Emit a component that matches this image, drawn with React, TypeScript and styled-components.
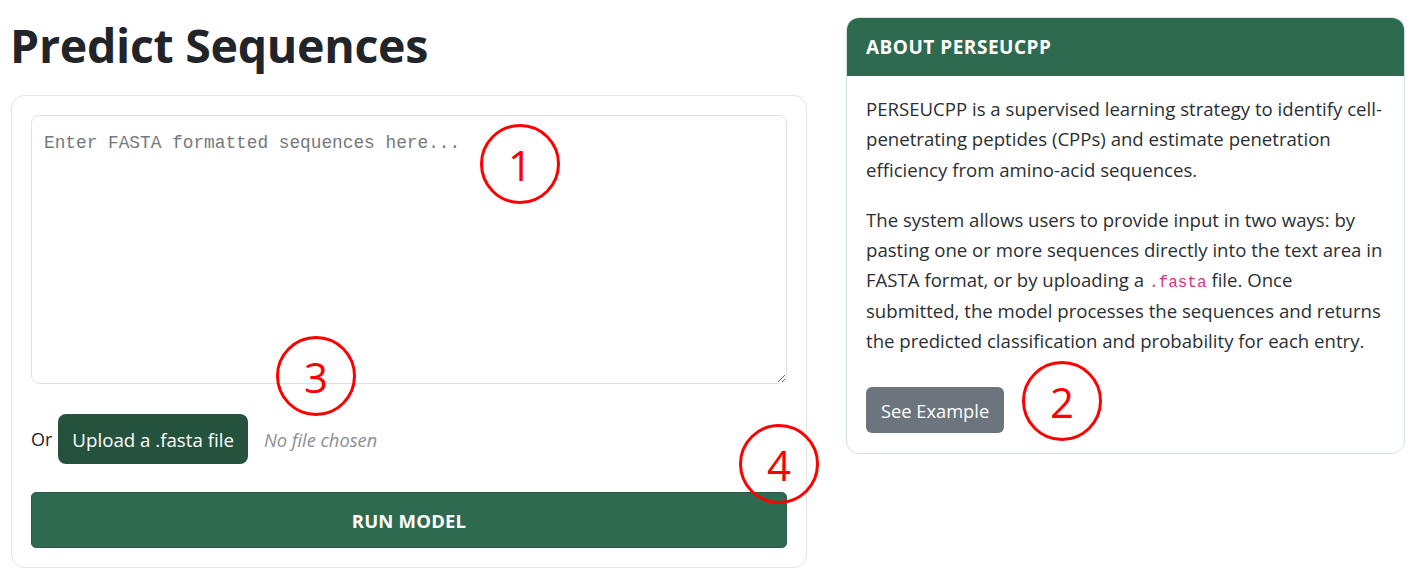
import React from 'react';
import styled, { createGlobalStyle } from 'styled-components';

const GlobalStyle = createGlobalStyle`
  html, body {
    margin: 0;
    padding: 0;
    background: #ffffff;
  }
  body {
    font-family: 'Open Sans', 'Noto Sans', Arial, sans-serif;
    color: #212529;
  }
  * {
    box-sizing: border-box;
  }
`;

const Page = styled.div`
  position: relative;
  width: 1415px;
  height: 580px;
  display: flex;
  align-items: flex-start;
  gap: 39px;
  padding: 0 10px 0 11px;
`;

const MainColumn = styled.div`
  width: 796px;
  display: flex;
  flex-direction: column;
`;

const Title = styled.h1`
  margin: 15px 0 20px -1px;
  font-size: 46.5px;
  line-height: 60px;
  font-weight: 700;
  letter-spacing: -0.3px;
  color: #212529;
`;

const Card = styled.div`
  border: 1px solid #e3e5e7;
  border-radius: 13px;
  padding: 19px;
  display: flex;
  flex-direction: column;
`;

const SequenceInput = styled.textarea`
  width: 100%;
  height: 269px;
  border: 1px solid #dee2e6;
  border-radius: 8px;
  padding: 14px 12px;
  font-family: 'Liberation Mono', 'DejaVu Sans Mono', monospace;
  font-size: 17.8px;
  line-height: 26px;
  resize: vertical;
  color: #212529;
  outline: none;

  &::placeholder {
    color: #75797d;
  }
`;

const UploadRow = styled.div`
  margin-top: 30px;
  display: flex;
  align-items: center;
  gap: 6px;
  font-size: 18px;
`;

const OrText = styled.span`
  color: #212529;
`;

const HiddenInput = styled.input`
  display: none;
`;

const UploadButton = styled.label`
  height: 50px;
  padding: 0 14px;
  display: inline-flex;
  align-items: center;
  background: #24523d;
  color: #ffffff;
  border-radius: 8px;
  font-size: 18.7px;
  cursor: pointer;
`;

const FileName = styled.span`
  margin-left: 10px;
  color: #8b8e91;
  font-style: italic;
  font-size: 18.3px;
`;

const RunButton = styled.button`
  margin-top: 28px;
  height: 56px;
  width: 100%;
  border: 1px solid #285c45;
  border-radius: 5px;
  background: #2e6a4f;
  color: #ffffff;
  font-family: inherit;
  font-size: 18.5px;
  font-weight: 700;
  letter-spacing: 0.2px;
  cursor: pointer;
`;

const InfoCard = styled.aside`
  margin-top: 17px;
  width: 559px;
  border: 1px solid #cfe5da;
  border-radius: 13px;
  overflow: hidden;
`;

const InfoHeader = styled.div`
  height: 58px;
  padding: 0 19px;
  display: flex;
  align-items: center;
  background: #2e6a4f;
  color: #ffffff;
  font-size: 19px;
  font-weight: 700;
  letter-spacing: 0.5px;
`;

const InfoBody = styled.div`
  padding: 18px 19px 20px;
`;

const Paragraph = styled.p`
  margin: 0 0 20px;
  font-size: 18.6px;
  line-height: 30.3px;
  color: #2b2f33;
`;

const Code = styled.code`
  font-family: 'Liberation Mono', 'DejaVu Sans Mono', monospace;
  font-size: 16px;
  line-height: 1;
  color: #d63384;
`;

const ExampleButton = styled.button`
  margin-top: 11px;
  height: 46px;
  padding: 0 15px;
  border: none;
  border-radius: 6px;
  background: #6c757d;
  color: #ffffff;
  font-family: inherit;
  font-size: 18.3px;
  cursor: pointer;
`;

const Marker = styled.div<{ $x: number; $y: number }>`
  position: absolute;
  left: ${(p) => p.$x - 40}px;
  top: ${(p) => p.$y - 40}px;
  width: 80px;
  height: 80px;
  border: 3px solid #ff0000;
  border-radius: 50%;
  display: flex;
  align-items: center;
  justify-content: center;
  color: #ff0000;
  font-family: 'Open Sans', Arial, sans-serif;
  font-size: 42px;
  font-weight: 400;
  pointer-events: none;
`;

const markers = [
  { n: 1, x: 520, y: 164 },
  { n: 2, x: 1062, y: 401 },
  { n: 3, x: 316, y: 376 },
  { n: 4, x: 779, y: 464 },
];

const App = () => {
  return (
    <React.Fragment>
      <GlobalStyle />
      <Page>
        <MainColumn>
          <Title>Predict Sequences</Title>
          <Card>
            <SequenceInput placeholder="Enter FASTA formatted sequences here..." />
            <UploadRow>
              <OrText>Or</OrText>
              <UploadButton htmlFor="fasta-file">Upload a .fasta file</UploadButton>
              <HiddenInput id="fasta-file" type="file" accept=".fasta" />
              <FileName>No file chosen</FileName>
            </UploadRow>
            <RunButton>RUN MODEL</RunButton>
          </Card>
        </MainColumn>
        <InfoCard>
          <InfoHeader>ABOUT PERSEUCPP</InfoHeader>
          <InfoBody>
            <Paragraph>
              PERSEUCPP is a supervised learning strategy to identify cell-penetrating peptides
              (CPPs) and estimate penetration efficiency from amino-acid sequences.
            </Paragraph>
            <Paragraph>
              The system allows users to provide input in two ways: by pasting one or more
              sequences directly into the text area in FASTA format, or by uploading a{' '}
              <Code>.fasta</Code> file. Once submitted, the model processes the sequences and
              returns the predicted classification and probability for each entry.
            </Paragraph>
            <ExampleButton>See Example</ExampleButton>
          </InfoBody>
        </InfoCard>
        {markers.map((m) => (
          <Marker key={m.n} $x={m.x} $y={m.y}>
            {m.n}
          </Marker>
        ))}
      </Page>
    </React.Fragment>
  );
};

export default App;
